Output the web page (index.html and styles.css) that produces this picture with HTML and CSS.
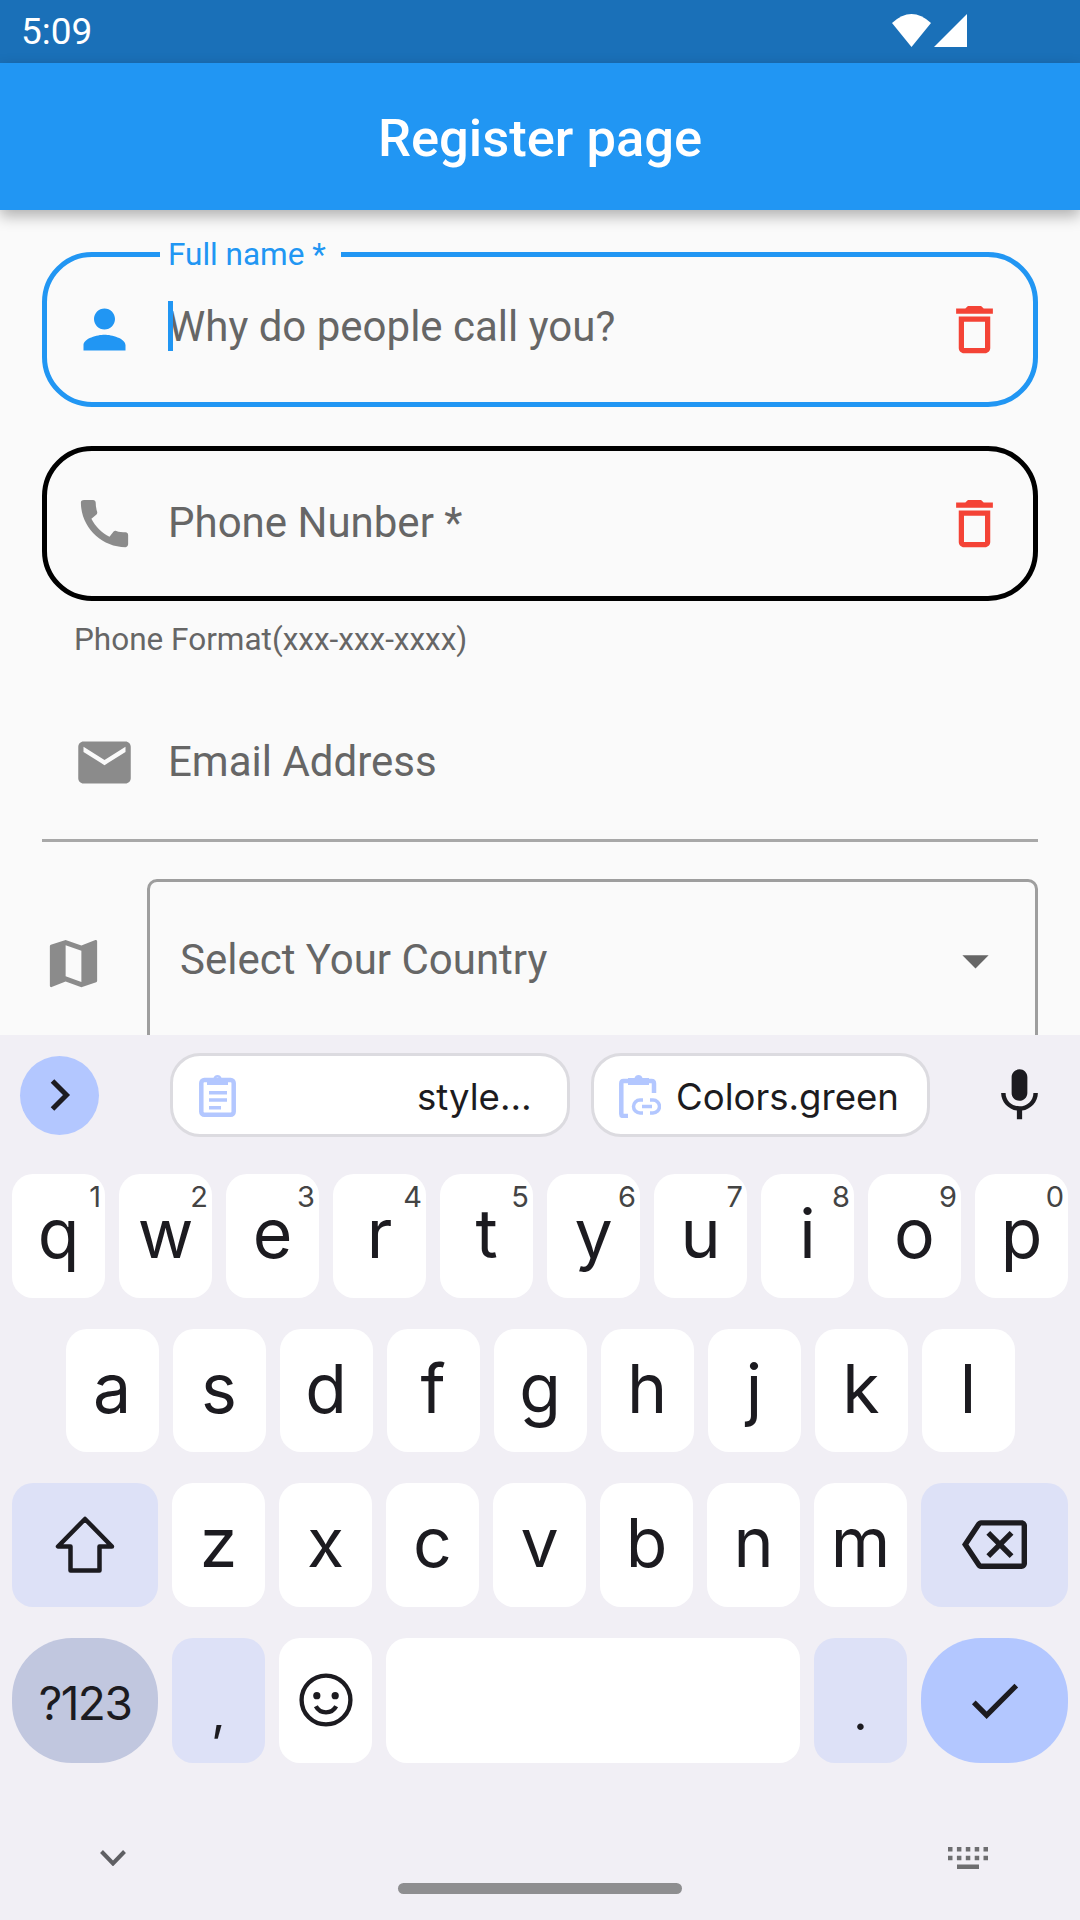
FILE: index.html
```html
<!DOCTYPE html>
<html lang="en">
<head>
    <meta charset="UTF-8" />
    <title>Register page</title>
    <link rel="stylesheet" href="styles.css">
</head>
<body>
    <div class="page">
        <div class="status-bar">
            <span class="clock">5:09</span>
            <div class="status-icons">
                <svg class="wifi" viewBox="0 0 39 33"><path fill="#fff" d="M19.500 33 0 9Q19.500 -9 39 9Z"/></svg>
                <svg class="signal" viewBox="0 0 33 33"><path fill="#fff" d="M0 33H33V0Z"/></svg>
            </div>
        </div>
        <div class="app-bar">Register page</div>

        <div class="form">
            <div class="field field-focus">
                <span class="field-label">Full name *</span>
                <svg class="icon icon-blue" viewBox="0 0 24 24"><path d="M12 12c2.21 0 4-1.79 4-4s-1.79-4-4-4-4 1.79-4 4 1.79 4 4 4zm0 2c-2.67 0-8 1.34-8 4v2h16v-2c0-2.66-5.33-4-8-4z"/></svg>
                <div class="field-text text-raised"><span class="caret"></span>Why do people call you?</div>
                <svg class="icon icon-red" viewBox="0 0 24 24"><path d="M6 19c0 1.1.9 2 2 2h8c1.1 0 2-.9 2-2V7H6v12zM8 9h8v10H8V9zm7.5-5l-1-1h-5l-1 1H5v2h14V4z"/></svg>
            </div>

            <div class="field field-dark">
                <svg class="icon" viewBox="0 0 24 24"><path d="M20.010 15.380c-1.230 0-2.420-.2-3.530-.56-.35-.12-.74-.03-1.010.24l-1.570 1.970c-2.830-1.350-5.480-3.900-6.890-6.830l1.950-1.660c.27-.28.35-.67.24-1.020-.37-1.110-.56-2.300-.56-3.530 0-.54-.45-.99-.99-.99H4.190C3.650 3 3 3.240 3 3.990 3 13.280 10.730 21 20.010 21c.71 0 .99-.63.99-1.180v-3.450c0-.54-.45-.99-.99-.99z"/></svg>
                <div class="field-text">Phone Nunber *</div>
                <svg class="icon icon-red" viewBox="0 0 24 24"><path d="M6 19c0 1.1.9 2 2 2h8c1.1 0 2-.9 2-2V7H6v12zM8 9h8v10H8V9zm7.5-5l-1-1h-5l-1 1H5v2h14V4z"/></svg>
            </div>
            <div class="helper">Phone Format(xxx-xxx-xxxx)</div>

            <div class="email-row">
                <svg class="icon" viewBox="0 0 24 24"><path d="M20 4H4c-1.1 0-1.99.9-1.99 2L2 18c0 1.1.9 2 2 2h16c1.1 0 2-.9 2-2V6c0-1.1-.9-2-2-2zm0 4l-8 5-8-5V6l8 5 8-5v2z"/></svg>
                <div class="field-text">Email Address</div>
            </div>

            <div class="country-row">
                <svg class="icon map-icon" viewBox="0 0 24 24"><path d="M20.5 3l-.16.03L15 5.1 9 3 3.36 4.9c-.21.07-.36.25-.36.48V20.5c0 .28.22.5.5.5l.16-.03L9 18.9l6 2.1 5.64-1.9c.21-.07.36-.25.36-.48V3.5c0-.28-.22-.5-.5-.5zM15 19l-6-2.11V5l6 2.11V19z"/></svg>
                <div class="select-box">
                    <div class="field-text text-raised">Select Your Country</div>
                    <svg class="icon icon-dark" viewBox="0 0 24 24"><path d="M7 10l5 5 5-5z"/></svg>
                </div>
            </div>
        </div>

        <div class="keyboard">
            <div class="suggest-row">
                <div class="expand">
                    <svg viewBox="0 0 42 42"><path d="M13.500 7 27.500 21 13.500 35" fill="none" stroke="#1c1b20" stroke-width="5"/></svg>
                </div>
                <div class="pill pill-one">
                    <svg class="clip" viewBox="0 0 37 44" fill="none" stroke="#b3c7ff"><rect x="2.300" y="7" width="32.400" height="34.700" rx="3" stroke-width="4.500"/><path d="M8 5h6.500a4.200 4.200 0 0 1 8 0H29v7H8zM18.500 4.500a1.800 1.800 0 1 0 .01 0z" fill="#b3c7ff" fill-rule="evenodd" stroke="none"/><path d="M10 19.700h18M10 27h18M10 34.700h12" stroke-width="3.500"/></svg>
                    <span class="pill-text-end">style…</span>
                </div>
                <div class="pill pill-two">
                    <svg class="clip clip-link" viewBox="0 0 42 45" fill="none" stroke="#b3c7ff" stroke-width="4.500"><path d="M9 8H4.500Q2.300 8 2.300 10.500V41q0 2 2 2H9M28 8h4.500Q35 8 35 10.500V20"/><path d="M9 5h6.500a4.200 4.200 0 0 1 8 0H30v7H9z" fill="#b3c7ff" stroke="none"/><path d="M24 27h-3a6.500 6.500 0 0 0 0 13h3M31 27h3a6.500 6.500 0 0 1 0 13h-3M23 33.500h10" stroke-width="3.500"/></svg>
                    <span class="pill-text">Colors.green</span>
                </div>
                <svg class="mic" viewBox="0 0 24 24"><path d="M12 14c1.66 0 2.99-1.34 2.99-3L15 5c0-1.66-1.34-3-3-3S9 3.34 9 5v6c0 1.66 1.34 3 3 3zm5.3-3c0 3-2.54 5.1-5.3 5.1S6.7 14 6.7 11H5c0 3.41 2.72 6.23 6 6.72V21h2v-3.28c3.28-.48 6-3.3 6-6.72h-1.7z"/></svg>
            </div>

            <div class="key-rows">
                <div class="key-row">
                    <div class="key">q<sup>1</sup></div>
                    <div class="key">w<sup>2</sup></div>
                    <div class="key">e<sup>3</sup></div>
                    <div class="key">r<sup>4</sup></div>
                    <div class="key">t<sup>5</sup></div>
                    <div class="key">y<sup>6</sup></div>
                    <div class="key">u<sup>7</sup></div>
                    <div class="key">i<sup>8</sup></div>
                    <div class="key">o<sup>9</sup></div>
                    <div class="key">p<sup>0</sup></div>
                </div>
                <div class="key-row key-row-inset">
                    <div class="key">a</div>
                    <div class="key">s</div>
                    <div class="key">d</div>
                    <div class="key">f</div>
                    <div class="key">g</div>
                    <div class="key">h</div>
                    <div class="key">j</div>
                    <div class="key">k</div>
                    <div class="key">l</div>
                </div>
                <div class="key-row">
                    <div class="key key-wide key-tint">
                        <svg class="shift-icon" viewBox="0 0 60 57"><path d="M30 3 3 30.500H15.500V54.500H44.500V30.500H57Z" fill="none" stroke="#1c1b20" stroke-width="4.500" stroke-linejoin="round"/></svg>
                    </div>
                    <div class="key">z</div>
                    <div class="key">x</div>
                    <div class="key">c</div>
                    <div class="key">v</div>
                    <div class="key">b</div>
                    <div class="key">n</div>
                    <div class="key">m</div>
                    <div class="key key-last key-tint">
                        <svg class="back-icon" viewBox="0 0 24 24"><path d="M22 3H7c-.69 0-1.23.35-1.59.88L0 12l5.41 8.11c.36.53.9.89 1.59.89h15c1.1 0 2-.9 2-2V5c0-1.1-.9-2-2-2zm0 16H7.070L2.400 12l4.660-7H22v14zm-11.590-2L14 13.410 17.590 17 19 15.590 15.410 12 19 8.410 17.590 7 14 10.590 10.410 7 9 8.410 12.590 12 9 15.590z" fill="#1c1b20"/></svg>
                    </div>
                </div>
                <div class="key-row key-row-tall">
                    <div class="key key-wide key-round key-grey">?123</div>
                    <div class="key key-tint key-punct">,</div>
                    <div class="key">
                        <svg class="emoji-icon" viewBox="0 0 24 24" fill="none" stroke="#1c1b20" stroke-width="1.800"><circle cx="12" cy="12" r="10.100"/><circle cx="8.200" cy="10.200" r="1.500" fill="#1c1b20" stroke="none"/><circle cx="15.800" cy="10.200" r="1.500" fill="#1c1b20" stroke="none"/><path d="M7.800 14.600c.9 1.700 2.400 2.500 4.200 2.500s3.300-.8 4.200-2.500"/></svg>
                    </div>
                    <div class="key key-space"></div>
                    <div class="key key-tint key-punct">.</div>
                    <div class="key key-last key-round key-blue">
                        <svg class="check-icon" viewBox="0 0 24 24"><path d="M9 16.170 4.830 12l-1.420 1.410L9 19 21 7l-1.410-1.410z" fill="#1c1b20"/></svg>
                    </div>
                </div>
            </div>

            <div class="nav-row">
                <svg class="nav-down" viewBox="0 0 26 16"><path d="M1.500 1.500 13 13.500 24.500 1.500" fill="none" stroke="#5f5f63" stroke-width="4"/></svg>
                <svg class="nav-keys" viewBox="0 0 40 22" fill="#6e6e70"><path d="M0 0h4.500v4.500H0zM8.900 0h4.500v4.500H8.900zM17.800 0h4.500v4.500h-4.500zM26.700 0h4.500v4.500h-4.500zM35.500 0H40v4.500h-4.500zM0 8.700h4.500v4.500H0zM8.900 8.700h4.500v4.500H8.900zM17.800 8.700h4.500v4.500h-4.500zM26.700 8.700h4.500v4.500h-4.500zM35.500 8.700H40v4.500h-4.500zM9 17.500h22V22H9z"/></svg>
            </div>
            <div class="home-bar"></div>
        </div>
    </div>
</body>
</html>
```

FILE: styles.css
```css
* {
    box-sizing: border-box;
}

body {
    margin: 0;
    padding: 0;
    font-family: Roboto, sans-serif;
    background: #fafafa;
}

.page {
    width: 1080px;
    height: 1920px;
    display: flex;
    flex-direction: column;
    overflow: hidden;
}

.status-bar {
    height: 63px;
    flex: none;
    background: #1a70b8;
    color: #fff;
    display: flex;
    justify-content: space-between;
    align-items: center;
    padding: 0 113px 0 21px;
}

.clock {
    font-size: 37px;
}

.status-icons {
    display: flex;
    align-items: center;
    gap: 3px;
    padding-bottom: 2px;
}

.wifi {
    width: 39px;
    height: 33px;
}

.signal {
    width: 33px;
    height: 33px;
}

.app-bar {
    height: 147px;
    flex: none;
    background: #2196f3;
    color: #fff;
    font-size: 52.500px;
    font-weight: 500;
    display: flex;
    align-items: center;
    justify-content: center;
    padding-top: 2px;
    box-shadow: 0 6px 14px rgba(0, 0, 0, 0.3);
    position: relative;
    z-index: 1;
}

.form {
    height: 825px;
    flex: none;
    padding: 42px 42px 0;
    overflow: hidden;
    background: #fafafa;
}

.field {
    position: relative;
    height: 155px;
    border: 5px solid #2196f3;
    border-radius: 50px;
    display: flex;
    align-items: center;
    padding: 0 27px 0 26px;
    gap: 32px;
}

.field-dark {
    border-color: #000;
    margin-top: 39px;
}

.field-label {
    position: absolute;
    top: -20px;
    left: 113px;
    padding: 0 15px 0 8px;
    background: #fafafa;
    color: #2196f3;
    font-size: 31.500px;
    line-height: 36px;
}

.icon {
    width: 63px;
    height: 63px;
    flex: none;
    fill: #8b8b8b;
}

.icon-blue {
    fill: #2196f3;
}

.icon-red {
    fill: #f44336;
}

.icon-dark {
    fill: #666;
    margin-bottom: 6px;
}

.field-text {
    flex: 1;
    position: relative;
    color: #666;
    font-size: 42px;
    line-height: 50px;
    top: -1px;
}

.text-raised {
    top: -3px;
}

.caret {
    position: absolute;
    left: 0;
    top: -1px;
    width: 5px;
    height: 50px;
    background: #2196f3;
}

.helper {
    color: #666;
    font-size: 31.500px;
    line-height: 38px;
    padding: 20px 0 0 32px;
}

.email-row {
    height: 183px;
    border-bottom: 3px solid #a8a8a8;
    display: flex;
    align-items: center;
    padding: 27px 0 0 31px;
    gap: 32px;
}

.country-row {
    display: flex;
    align-items: center;
    margin-top: 37px;
}

.map-icon {
    margin-right: 42px;
}

.select-box {
    flex: 1;
    height: 168px;
    border: 3px solid #9e9e9e;
    border-radius: 10px;
    display: flex;
    align-items: center;
    padding: 0 28px 0 30px;
}

.keyboard {
    flex: 1;
    background: #f1eff5;
    padding-top: 18px;
    position: relative;
    z-index: 2;
    font-family: Inter, sans-serif;
}

.suggest-row {
    height: 84px;
    display: flex;
    align-items: center;
    padding-left: 20px;
}

.expand {
    width: 79px;
    height: 79px;
    border-radius: 50%;
    background: #b3c7ff;
    display: flex;
    align-items: center;
    justify-content: center;
    margin-right: 71px;
}

.expand svg {
    width: 42px;
    height: 42px;
}

.pill {
    height: 84px;
    background: #fff;
    border: 3px solid #dcdbe0;
    border-radius: 30px;
    display: flex;
    align-items: center;
    font-size: 36.600px;
    color: #1c1b20;
    padding-left: 26px;
}

.pill-one {
    width: 400px;
    margin-right: 21px;
}

.pill-two {
    width: 339px;
    padding-left: 25px;
}

.clip {
    width: 37px;
    height: 44px;
    flex: none;
}

.clip-link {
    width: 42px;
    height: 45px;
}

.pill-text-end {
    margin-left: 181px;
    padding-top: 4px;
}

.pill-text {
    margin-left: 15px;
    padding-top: 4px;
}

.mic {
    width: 63px;
    height: 63px;
    margin-left: 58px;
    fill: #1c1b20;
}

.key-rows {
    margin-top: 37px;
    display: flex;
    flex-direction: column;
    gap: 31px;
    padding: 0 12px;
}

.key-row {
    display: flex;
    gap: 14px;
}

.key-row-inset {
    padding-left: 53.500px;
}

.key {
    position: relative;
    width: 93px;
    height: 123.500px;
    background: #fff;
    border-radius: 21px;
    display: flex;
    align-items: center;
    justify-content: center;
    padding-bottom: 3px;
    font-size: 68px;
    line-height: 0.7;
    color: #1c1b20;
}

.key-row-tall .key {
    height: 125px;
}

.key svg {
    margin-top: 3px;
}

.key sup {
    position: absolute;
    top: 7px;
    right: 4px;
    font-size: 29px;
    line-height: 32px;
    color: #444;
}

.key-wide {
    width: 146px;
}

.key-last {
    width: 147px;
}

.key-space {
    width: 414px;
}

.key-tint {
    background: #dde1f7;
}

.key-grey {
    background: #c1c7df;
    font-size: 46px;
    letter-spacing: -1.500px;
    padding: 6px 0 0;
}

.key-blue {
    background: #b3c7ff;
}

.key-round {
    border-radius: 60px;
}

.key-punct {
    font-size: 50px;
    line-height: normal;
    align-items: flex-end;
    padding-bottom: 20.500px;
}

.shift-icon {
    width: 60px;
    height: 57px;
}

.back-icon {
    width: 65px;
    height: 65px;
}

.emoji-icon {
    width: 58px;
    height: 58px;
}

.check-icon {
    width: 63px;
    height: 63px;
}

.nav-row {
    margin-top: 84px;
    display: flex;
    justify-content: space-between;
    align-items: center;
    padding: 0 92px 0 100px;
}

.nav-down {
    width: 26px;
    height: 16px;
}

.nav-keys {
    width: 40px;
    height: 22px;
}

.home-bar {
    width: 284px;
    height: 11px;
    margin: 14px auto 0;
    border-radius: 6px;
    background: #8e8e90;
}
```
